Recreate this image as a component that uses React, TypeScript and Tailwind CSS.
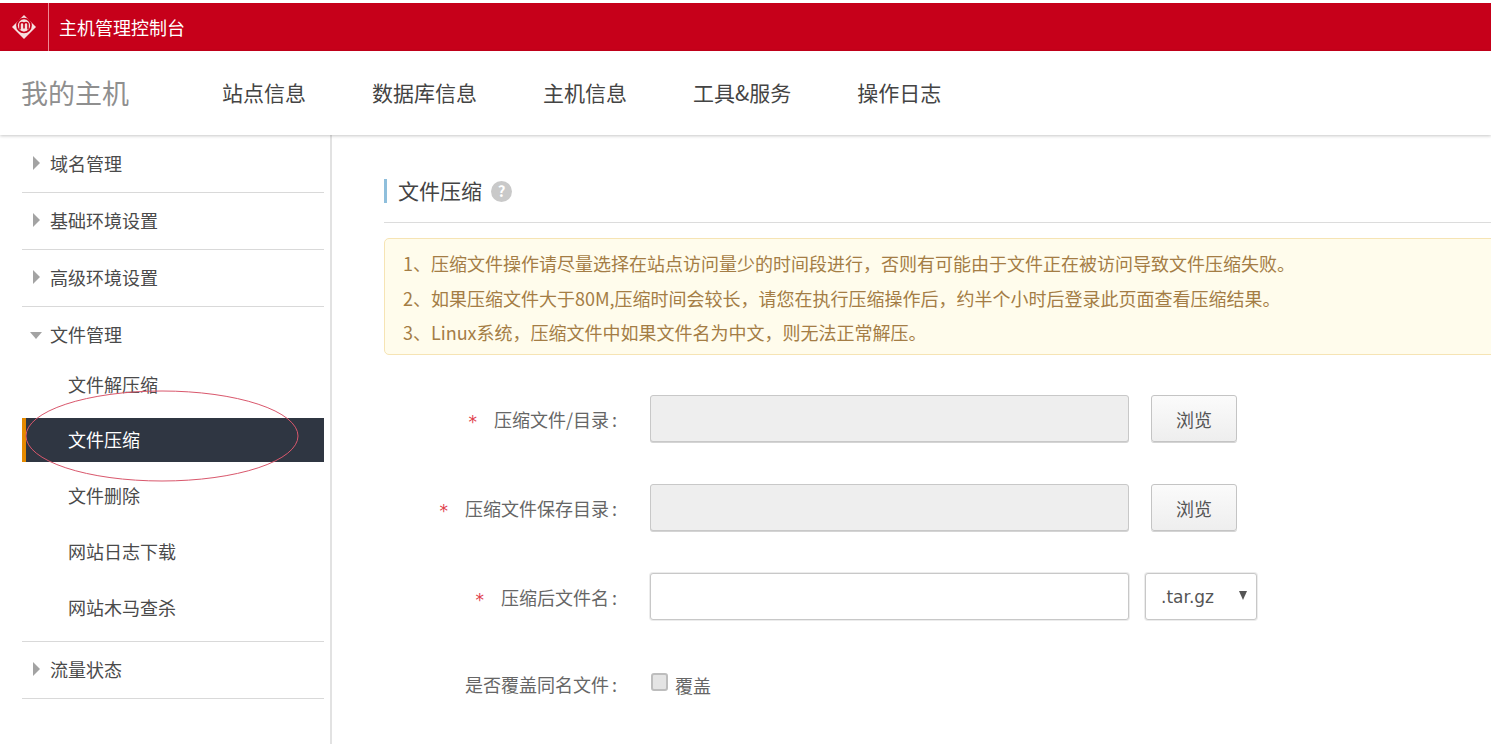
const navItems = ["站点信息", "数据库信息", "主机信息", "工具&服务", "操作日志"];
const subItems = ["文件解压缩", "文件压缩", "文件删除", "网站日志下载", "网站木马查杀"];

function Arrow({ open }: { open?: boolean }) {
  if (open) {
    return <span className="mt-[2px] mr-[8px] ml-[8px] h-0 w-0 border-x-[6.5px] border-t-[7px] border-x-transparent border-t-[#a3a3a3]" />;
  }
  return <span className="mr-[10px] ml-[11px] h-0 w-0 border-y-[7px] border-l-[7px] border-y-transparent border-l-[#a3a3a3]" />;
}

function SideGroup({ label, open }: { label: string; open?: boolean }) {
  return (
    <div className={`flex h-[57px] items-center pb-[2px] text-[18px] text-[#4a4a4a] ${open ? "" : "border-b border-[#d9d9d9]"}`}>
      <Arrow open={open} />
      {label}
    </div>
  );
}

function Colon() {
  return <span className="ml-[3px]">:</span>;
}

function Field({ label, required, children }: { label: string; required?: boolean; children: React.ReactNode }) {
  return (
    <div className="flex h-[47px] items-center">
      <div className="flex w-[233px] items-center justify-end pt-[1px] text-[18px] text-[#666]">
        {required && <span className="mr-[17px] pt-[7px] font-['DejaVu_Sans',sans-serif] text-[17px] leading-none text-[#e0404c]">*</span>}
        <span>{label}<Colon /></span>
      </div>
      <div className="ml-[33px] flex items-center">{children}</div>
    </div>
  );
}

function BrowseButton() {
  return (
    <button className="ml-[22px] h-[47px] w-[86px] rounded-[3px] border border-[#c4c4c4] bg-gradient-to-b from-[#fbfbfb] to-[#eeeeee] pt-[1px] text-[18px] text-[#555] shadow-[0_1px_0_#d4d4d4]">
      浏览
    </button>
  );
}

export default function App() {
  return (
    <div className="relative h-[744px] w-[1491px] overflow-hidden bg-white font-['Noto_Sans_CJK_SC','Noto_Sans',sans-serif]">
      <div className="mt-[3px] flex h-[48px] items-center bg-[#c6001a] text-white">
        <div className="flex w-[48px] items-center justify-center">
          <svg width="26" height="26" viewBox="0 0 26 26">
            <path d="M13 1 L25 13 L13 25 L1 13 Z" fill="#f6dfdf" />
            <circle cx="13" cy="11.5" r="7" fill="none" stroke="#c6001a" strokeWidth="1.7" />
            <path d="M9 10.5 a2 2 0 0 1 4 0 a2 2 0 0 1 4 0 M9 10.5 v5 M17 10.5 v5 M13 10.5 v4" fill="none" stroke="#c6001a" strokeWidth="1.6" />
          </svg>
        </div>
        <div className="h-full w-px bg-[#ee8a95]" />
        <span className="ml-[10px] text-[18px]">主机管理控制台</span>
      </div>

      <div className="relative z-10 flex h-[84px] items-center bg-white pl-[21px] shadow-[0_1px_3px_rgba(0,0,0,0.22)]">
        <div className="w-[201px] text-[27px] text-[#8f8f8f]">我的主机</div>
        <div className="flex gap-[66px] text-[21px] text-[#444]">
          {navItems.map((item) => (
            <span key={item}>{item}</span>
          ))}
        </div>
      </div>

      <div className="flex h-[609px]">
        <aside className="h-full w-[332px] shrink-0 border-r-2 border-[#e2e2e2] pt-[1px] pr-[6px] pl-[22px]">
          <SideGroup label="域名管理" />
          <SideGroup label="基础环境设置" />
          <SideGroup label="高级环境设置" />
          <SideGroup label="文件管理" open />
          <div className="-mt-[2px] flex flex-col gap-[11.75px] border-b border-[#d9d9d9] pb-[12px]">
            {subItems.map((item) => (
              <div
                key={item}
                className={
                  item === "文件压缩"
                    ? "flex h-[44px] items-center border-l-[4px] border-[#e58a00] bg-[#2f3642] pl-[42px] text-[18px] text-white"
                    : "flex h-[44px] items-center pl-[46px] text-[18px] text-[#4a4a4a]"
                }
              >
                {item}
              </div>
            ))}
          </div>
          <SideGroup label="流量状态" />
        </aside>

        <main className="min-w-0 flex-1 pl-[52px]">
          <div className="h-[88px] border-b border-[#dcdcdc] pt-[44px]">
            <div className="flex h-[24px] items-center border-l-[3px] border-[#8fbfdc] pl-[11px] text-[21px] text-[#444]">
              文件压缩
              <span className="ml-[9px] flex h-[21px] w-[21px] items-center justify-center rounded-full bg-[#c9c9c9] text-[15px] font-bold text-white">
                ?
              </span>
            </div>
          </div>

          <div className="mt-[15px] h-[117px] w-[1120px] rounded-[5px] border border-[#f6e4b4] bg-[#fffcec] pt-[7px] pl-[18px] text-[18px] leading-[34.5px] text-[#a47d45]">
            <p>1、压缩文件操作请尽量选择在站点访问量少的时间段进行，否则有可能由于文件正在被访问导致文件压缩失败。</p>
            <p>2、如果压缩文件大于80M,压缩时间会较长，请您在执行压缩操作后，约半个小时后登录此页面查看压缩结果。</p>
            <p>3、Linux系统，压缩文件中如果文件名为中文，则无法正常解压。</p>
          </div>

          <div className="mt-[40px] flex flex-col gap-[42px]">
            <Field label="压缩文件/目录" required>
              <div className="h-[47px] w-[479px] rounded-[3px] border border-[#c8c8c8] bg-[#eeeeee] shadow-[0_1px_0_#d4d4d4]" />
              <BrowseButton />
            </Field>
            <Field label="压缩文件保存目录" required>
              <div className="h-[47px] w-[479px] rounded-[3px] border border-[#c8c8c8] bg-[#eeeeee] shadow-[0_1px_0_#d4d4d4]" />
              <BrowseButton />
            </Field>
            <Field label="压缩后文件名" required>
              <div className="h-[47px] w-[479px] rounded-[3px] border border-[#c8c8c8] bg-white shadow-[0_0_0_1px_#ececec]" />
              <div className="ml-[16px] flex h-[47px] w-[112px] items-center justify-between rounded-[3px] border border-[#c8c8c8] bg-white pr-[9px] pl-[15px] shadow-[0_0_0_1px_#ececec]">
                <span className="pt-[2px] font-['DejaVu_Sans',sans-serif] text-[17px] text-[#555]">.tar.gz</span>
                <span className="mb-[3px] h-0 w-0 border-x-[4.5px] border-t-[9px] border-x-transparent border-t-[#555]" />
              </div>
            </Field>
            <div className="-mt-[2px] flex h-[47px] items-center">
              <div className="w-[233px] pt-[1px] text-right text-[18px] text-[#666]">是否覆盖同名文件<Colon /></div>
              <div className="mb-[3px] ml-[34px] h-[18px] w-[17px] rounded-[3px] border-2 border-[#bdbdbd] bg-[#e4e4e4]" />
              <span className="ml-[7px] pt-[3px] text-[18px] text-[#666]">覆盖</span>
            </div>
          </div>
        </main>
      </div>

      <svg className="pointer-events-none absolute top-[388px] left-[24px] z-20" width="278" height="96" viewBox="0 0 278 96">
        <ellipse cx="138" cy="48" rx="136" ry="45" fill="none" stroke="#d9576c" strokeWidth="1" />
      </svg>
    </div>
  );
}
